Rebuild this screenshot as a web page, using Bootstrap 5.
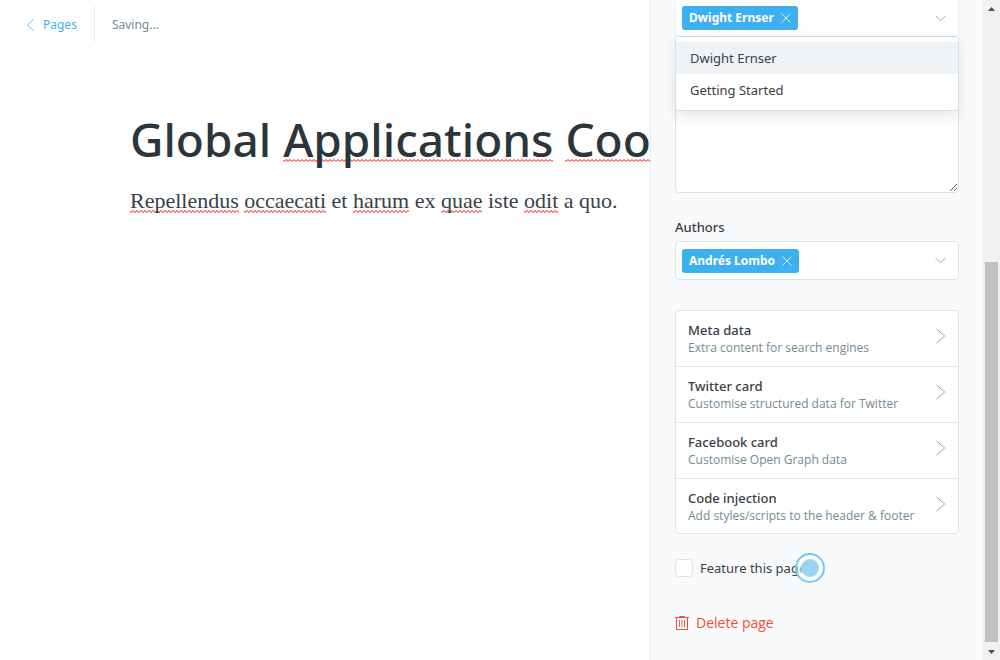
<!DOCTYPE html>
<html lang="en">
<head>
<meta charset="utf-8">
<meta name="viewport" content="width=device-width, initial-scale=1">
<title>Edit page</title>
<link href="https://cdn.jsdelivr.net/npm/bootstrap@5.3.0/dist/css/bootstrap.min.css" rel="stylesheet">
<style>
  :root { --line: #dae4ea; --blue: #3eb0ef; --ink: #394047; --muted: #738a94; }
  body { font: 13px/20px "Noto Sans", "Open Sans", sans-serif; color: var(--ink); }
  a { text-decoration: none; }
  .topbar { padding: 6px 24px; font-size: 12px; color: var(--muted); line-height: 36px; }
  .back-link { color: var(--blue); padding-right: 17px; border-right: 1px solid #e3edf3; }
  .save-state { padding-left: 17px; }
  .topbar > * { padding-top: 1px; line-height: 35px; }
  .doc { padding: 60px 0 0 130px; white-space: nowrap; }
  .doc-title { font-size: 46px; font-weight: 500; line-height: 62px; color: #2b353a; margin-bottom: 15px; }
  .doc-text { font: 22px/32px "Liberation Serif", serif; color: #37424a; }
  .misspelt {
    background: url("data:image/svg+xml,%3Csvg xmlns='http://www.w3.org/2000/svg' width='4' height='3'%3E%3Cpath d='M-1 0L1 2L3 0L5 2' fill='none' stroke='red' stroke-width='1' transform='translate(0 .5)'/%3E%3C/svg%3E") repeat-x 0 bottom;
  }
  .doc-title .misspelt { background-position-y: calc(100% - 8px); }
  .sidebar { flex: 0 0 350px; background: #f9fafc; border-left: 1px solid #e3edf3; }
  .settings { padding: 0 24px 24px; }
  .field-box { background: #fff; border: 1px solid var(--line); border-radius: 4px; }
  .token-field { height: 39px; padding: 0 12px 0 6px; }
  .token-field.opened { height: 37px; border-top: 0; border-color: #e8eff3; border-bottom-color: #cfdbe3; }
  .token { background: var(--blue); color: #fff; font-size: 12px; font-weight: 700; line-height: 24px; border: 0; border-radius: 3px; padding: 0 7px; gap: 7px; }
  .chevron-btn { border: 0; background: none; padding: 0; line-height: 0; }
  .options { top: 37px; left: 0; right: 0; z-index: 2; padding: 5px 0 4px; background: #fff; border: 1px solid #d5dfe5; border-top: 0; border-radius: 0 0 4px 4px; box-shadow: 0 5px 14px rgba(50,60,70,.13); }
  .option { display: block; width: 100%; border: 0; background: none; color: var(--ink); text-align: left; padding: 6px 14px; line-height: 20px; }
  .option.current { background: #eff3f6; }
  .excerpt { display: block; width: 100%; height: 107px; margin: 49px 0 24px; resize: vertical; }
  .field-label { font-size: 13px; font-weight: 500; line-height: 20px; margin-bottom: 4px; display: block; }
  .panels { margin-top: 30px; }
  .panel-row { width: 100%; border: 0; border-bottom: 1px solid var(--line); background: none; text-align: left; padding: 10px 12px 9px; color: var(--ink); }
  .panel-row:last-child { border-bottom: 0; padding-bottom: 8px; }
  .panel-row svg { margin-bottom: 6px; }
  .panel-name { font-weight: 500; line-height: 18px; }
  .panel-info { font: 12px/18px "Open Sans", "Noto Sans", sans-serif; color: var(--muted); }
  .feature { margin-top: 24px; }
  .feature input { appearance: none; width: 18px; height: 18px; background: #fff; border: 1px solid var(--line); border-radius: 4px; margin: 0 7px 0 0; }
  .click-mark { width: 30px; height: 30px; right: -19px; top: -5px; }
  .delete { margin-top: 35px; border: 0; background: none; padding: 0; font: 14px/20px "Open Sans", "Noto Sans", sans-serif; color: #f05230; gap: 7px; }
  .scroll-track { flex: 0 0 17px; background: #f1f1f1; padding: 7px 2px 6px; }
  .scroll-thumb { width: 13px; flex: 379 0 0; background: #c1c1c1; }
  .scroll-gap { flex: 251 0 0; }
</style>
</head>
<body>
<div class="d-flex min-vh-100">
  <main class="flex-grow-1 overflow-hidden">
    <nav class="topbar d-flex">
      <a class="back-link d-flex align-items-center" href="#">
        <svg class="me-2" width="11" height="12" viewBox="0 0 11 12" fill="none" stroke="currentColor" stroke-width=".8"><path d="M9.500 .5L3.500 6L9.500 11.500"/></svg>Pages
      </a>
      <span class="save-state">Saving...</span>
    </nav>
    <article class="doc">
      <h1 class="doc-title">Global <span class="misspelt">Applications</span> <span class="misspelt">Coo</span></h1>
      <p class="doc-text mb-0"><span class="misspelt">Repellendus</span> <span class="misspelt">occaecati</span> et <span class="misspelt">harum</span> ex <span class="misspelt">quae</span> iste <span class="misspelt">odit</span> a quo.</p>
    </article>
  </main>
  <aside class="sidebar d-flex">
    <div class="settings flex-grow-1">
      <div class="position-relative">
        <div class="field-box token-field opened d-flex align-items-center justify-content-between">
          <button class="token d-flex align-items-center">Dwight Ernser
            <svg width="10" height="10" viewBox="0 0 10 10" stroke="#fff" stroke-width=".8"><path d="M.5.5L9.500 9.500M9.500.5L.5 9.500"/></svg>
          </button>
          <button class="chevron-btn" aria-label="Close tags"><svg width="11" height="7" viewBox="0 0 11 7" fill="none" stroke="#91a5b1"><path d="M.5.8L5.500 5.800L10.500.8"/></svg></button>
        </div>
        <div class="options position-absolute">
          <button class="option current">Dwight Ernser</button>
          <button class="option">Getting Started</button>
        </div>
      </div>
      <textarea class="field-box excerpt" aria-label="Excerpt"></textarea>
      <span class="field-label">Authors</span>
      <div class="field-box token-field d-flex align-items-center justify-content-between">
        <button class="token d-flex align-items-center">Andrés Lombo
          <svg width="10" height="10" viewBox="0 0 10 10" stroke="#fff" stroke-width=".8"><path d="M.5.5L9.500 9.500M9.500.5L.5 9.500"/></svg>
        </button>
        <button class="chevron-btn" aria-label="Open authors"><svg width="11" height="7" viewBox="0 0 11 7" fill="none" stroke="#91a5b1"><path d="M.5.8L5.500 5.800L10.500.8"/></svg></button>
      </div>
      <div class="field-box panels">
        <button class="panel-row d-flex align-items-center justify-content-between">
          <span><span class="panel-name d-block">Meta data</span><span class="panel-info d-block">Extra content for search engines</span></span>
          <svg width="10" height="16" viewBox="0 0 10 16" fill="none" stroke="#8fa2ad"><path d="M.7 1L8.700 8L.7 15"/></svg>
        </button>
        <button class="panel-row d-flex align-items-center justify-content-between">
          <span><span class="panel-name d-block">Twitter card</span><span class="panel-info d-block">Customise structured data for Twitter</span></span>
          <svg width="10" height="16" viewBox="0 0 10 16" fill="none" stroke="#8fa2ad"><path d="M.7 1L8.700 8L.7 15"/></svg>
        </button>
        <button class="panel-row d-flex align-items-center justify-content-between">
          <span><span class="panel-name d-block">Facebook card</span><span class="panel-info d-block">Customise Open Graph data</span></span>
          <svg width="10" height="16" viewBox="0 0 10 16" fill="none" stroke="#8fa2ad"><path d="M.7 1L8.700 8L.7 15"/></svg>
        </button>
        <button class="panel-row d-flex align-items-center justify-content-between">
          <span><span class="panel-name d-block">Code injection</span><span class="panel-info d-block">Add styles/scripts to the header &amp; footer</span></span>
          <svg width="10" height="16" viewBox="0 0 10 16" fill="none" stroke="#8fa2ad"><path d="M.7 1L8.700 8L.7 15"/></svg>
        </button>
      </div>
      <div class="feature d-flex">
        <div class="position-relative d-flex align-items-center">
          <input type="checkbox" id="feature"><label for="feature">Feature this page</label>
          <svg class="click-mark position-absolute" viewBox="0 0 30 30"><circle cx="15" cy="15" r="14" fill="#fff" fill-opacity=".5" stroke="#74c6f3" stroke-width="2"/><circle cx="15" cy="15" r="9" fill="#93d2f6" fill-opacity=".95"/><circle cx="15" cy="15" r="8" fill="none" stroke="#a9dbf7" stroke-dasharray="2 2"/></svg>
        </div>
      </div>
      <button class="delete d-flex align-items-center">
        <svg width="14" height="16" viewBox="0 0 14 16" fill="none" stroke="currentColor"><path d="M0 2.500H14M4.500 2V1.500H9.500V2M1.500 2.500V14.500H12.500V2.500"/><path d="M4.500 5V12M7 5V12M9.500 5V12" stroke-width=".9"/></svg>
        Delete page
      </button>
    </div>
    <div class="scroll-track d-flex flex-column align-items-center" aria-hidden="true">
      <svg class="flex-shrink-0" width="7" height="4" viewBox="0 0 7 4" fill="#505050"><path d="M0 4L3.500 0L7 4"/></svg>
      <div class="scroll-gap"></div>
      <div class="scroll-thumb"></div>
      <svg class="flex-shrink-0 mt-2" width="7" height="4" viewBox="0 0 7 4" fill="#505050"><path d="M0 0L3.500 4L7 0"/></svg>
    </div>
  </aside>
</div>
<script src="https://cdn.jsdelivr.net/npm/bootstrap@5.3.0/dist/js/bootstrap.bundle.min.js"></script>
</body>
</html>
